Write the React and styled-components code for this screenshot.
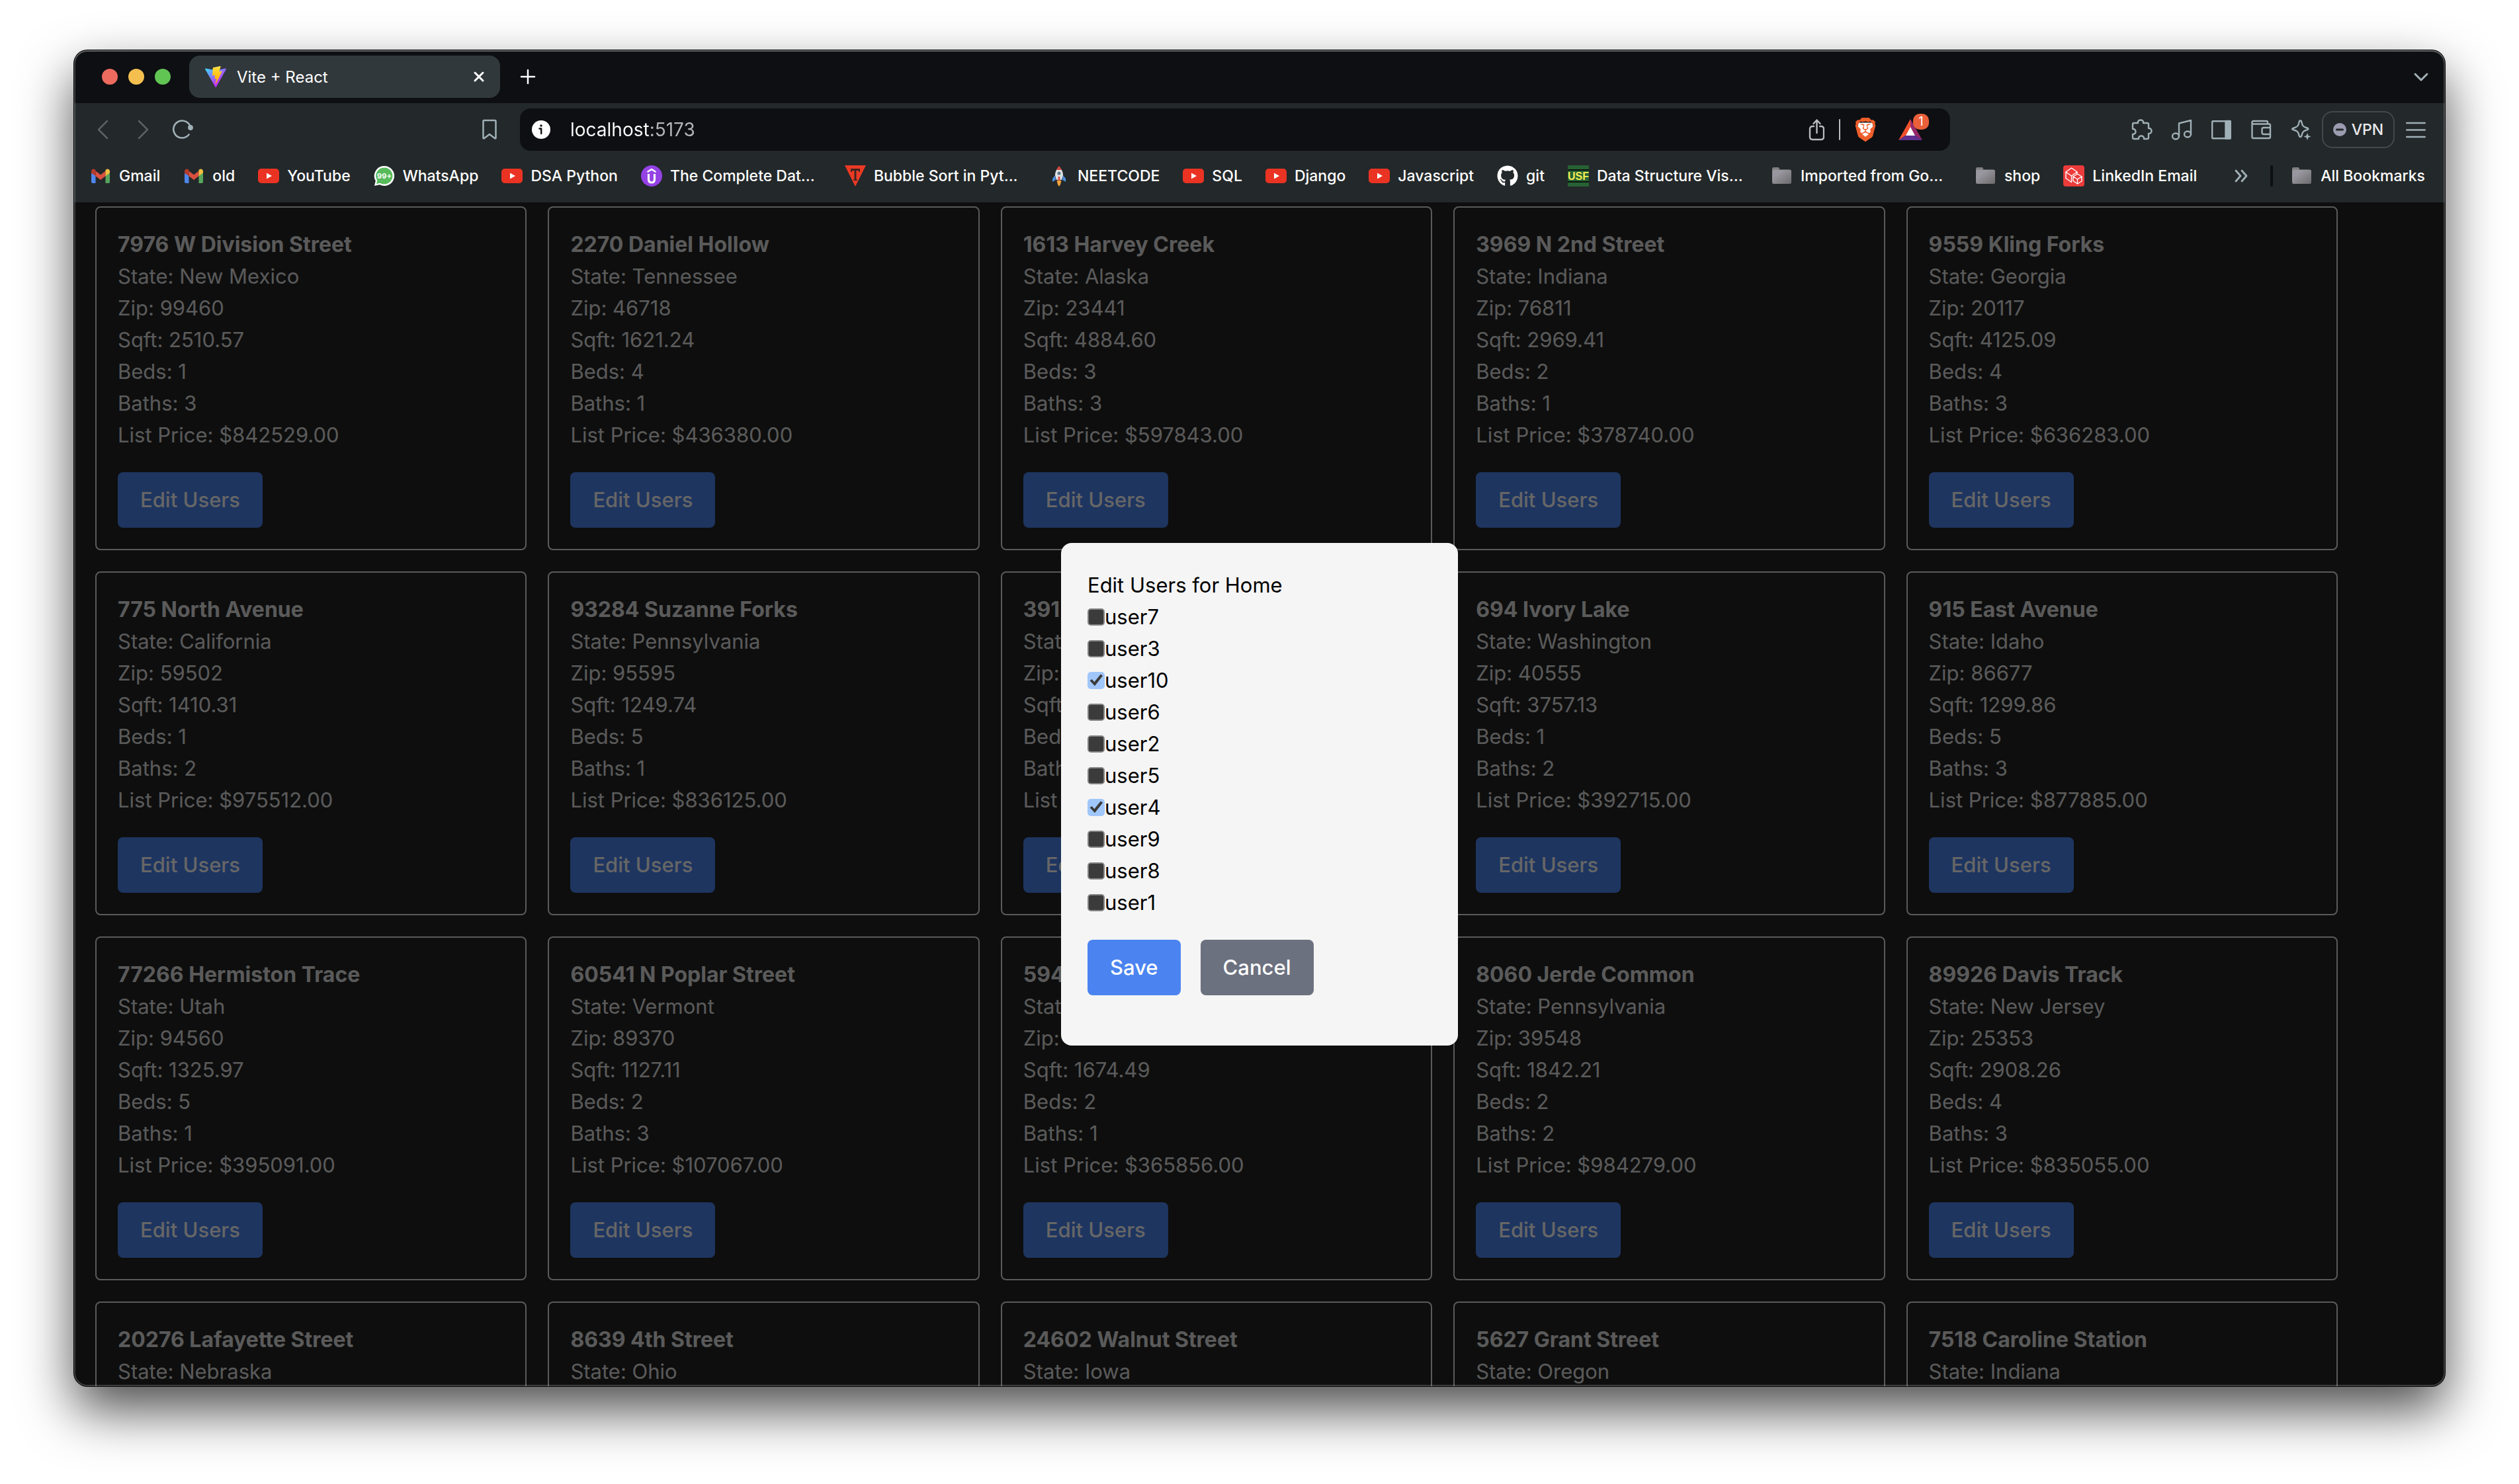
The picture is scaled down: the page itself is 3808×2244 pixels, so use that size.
import React from "react";
import styled, { createGlobalStyle } from "styled-components";
import { FaGithub } from "react-icons/fa";
import { SiBrave } from "react-icons/si";

const colors = {
  strip: "#0d0f12",
  toolbar: "#23282a",
  tab: "#31383b",
  icon: "#a0b0b7",
  iconDim: "#596165",
  page: "#242424",
  pageText: "#e1e1e1",
  blue: "#4b84f0",
  grey: "#6c717f",
};

const GlobalStyle = createGlobalStyle`
  *, *::before, *::after { box-sizing: border-box; }
  body {
    margin: 0;
    background: #fff;
    font-family: Inter, "Liberation Sans", sans-serif;
  }
  button { font-family: inherit; border: 0; background: none; padding: 0; cursor: pointer; }
`;

const Desktop = styled.main`
  display: flex;
  height: 100vh;
  padding: 76px 112px 148px;
  overflow: hidden;
`;

const BrowserWindow = styled.div`
  position: relative;
  display: flex;
  flex: 1;
  flex-direction: column;
  min-width: 0;
  overflow: hidden;
  border-radius: 20px;
  background: ${colors.toolbar};
  box-shadow: 0 0 0 1px #000, 0 36px 80px rgba(0, 0, 0, 0.7);

  &::after {
    content: "";
    position: absolute;
    inset: 0;
    z-index: 2;
    border-radius: 20px;
    box-shadow: inset 0 0 0 2px rgba(255, 255, 255, 0.2), inset 0 2px 0 rgba(255, 255, 255, 0.2);
    pointer-events: none;
  }
`;

const TabStrip = styled.header`
  display: flex;
  align-items: center;
  height: 80px;
  flex-shrink: 0;
  padding: 0 20px 0 42px;
  background: ${colors.strip};
`;

const TrafficLights = styled.div`
  display: flex;
  gap: 16px;
  margin-right: 28px;
`;

const Light = styled.button`
  width: 24px;
  height: 24px;
  border-radius: 50%;
  background: ${(p) => p.$color};
`;

const Tab = styled.div`
  display: flex;
  align-items: center;
  gap: 16px;
  width: 470px;
  height: 64px;
  padding: 0 16px 0 24px;
  border-radius: 16px;
  background: ${colors.tab};
  color: #fff;
  font-size: 24px;
  font-weight: 400;
`;

const TabTitle = styled.span`
  flex: 1;
`;

const IconButton = styled.button`
  display: flex;
  align-items: center;
  justify-content: center;
  flex-shrink: 0;
  width: ${(p) => (p.$narrow ? "24px" : "32px")};
  height: 32px;
  color: ${(p) => p.$color || colors.icon};
  margin-left: ${(p) => (p.$push ? "auto" : p.$space ? "26px" : "0")};
`;

const Toolbar = styled.div`
  display: grid;
  grid-template-columns: 644px minmax(0, 1fr) 718px;
  column-gap: 30px;
  align-items: center;
  height: 80px;
  flex-shrink: 0;
`;

const NavGroup = styled.nav`
  display: flex;
  align-items: center;
  gap: 28px;
  padding-left: 28px;
`;

const ToolGroup = styled.div`
  display: flex;
  align-items: center;
  justify-content: flex-end;
  gap: 16px;
  padding-right: 28px;
`;

const Extensions = styled.div`
  display: flex;
  gap: 28px;
`;

const VpnButton = styled.button`
  display: flex;
  align-items: center;
  justify-content: center;
  gap: 8px;
  width: 110px;
  height: 56px;
  border: 2px solid #40494e;
  border-radius: 16px;
  color: #e9eaec;
  font-size: 23px;
  font-weight: 500;
`;

const AddressBar = styled.div`
  display: flex;
  align-items: center;
  gap: 22px;
  height: 64px;
  padding: 0 30px 0 18px;
  border-radius: 16px;
  background: ${colors.strip};
`;

const AddressInput = styled.input`
  flex: 1;
  min-width: 0;
  height: 48px;
  margin-left: 8px;
  padding: 0;
  border: 0;
  outline: 0;
  font-family: inherit;
  font-size: 28px;
  color: #fff;
  background: linear-gradient(90deg, #fff 119px, #b4b6b8 119px);
  -webkit-background-clip: text;
  background-clip: text;
  -webkit-text-fill-color: transparent;
`;

const Divider = styled.span`
  width: ${(p) => p.$width}px;
  height: 32px;
  border-radius: 2px;
  background: ${(p) => p.$color};
`;

const RewardsButton = styled.button`
  position: relative;
  display: flex;
  justify-content: center;
  width: 60px;
`;

const Badge = styled.span`
  position: absolute;
  top: -8px;
  left: 34px;
  width: 24px;
  height: 24px;
  border-radius: 10px;
  background: #e9603a;
  color: #fff;
  font-size: 18px;
  line-height: 24px;
  text-align: center;
`;

const BookmarksBar = styled.nav`
  display: flex;
  align-items: center;
  gap: 35px;
  height: 70px;
  flex-shrink: 0;
  padding: 0 30px 10px 24px;
`;

const BookmarkLink = styled.a`
  display: flex;
  align-items: center;
  gap: 12px;
  color: #fff;
  font-size: 23px;
  font-weight: 500;
  line-height: 32px;
  white-space: nowrap;
  text-decoration: none;
`;

const BookmarkLabel = styled.span`
  width: ${(p) => (p.$long ? "229px" : "auto")};
`;

const BookmarksEnd = styled.div`
  display: flex;
  align-items: center;
  gap: 28px;
  margin-left: auto;
`;

const Viewport = styled.div`
  position: relative;
  flex: 1;
  min-height: 0;
  overflow: hidden;
  background: ${colors.page};
  color: ${colors.pageText};
`;

const HomeGrid = styled.section`
  display: grid;
  grid-template-columns: repeat(5, minmax(0, 1fr));
  gap: 32px;
  padding: 6px 162px 32px 32px;
`;

const Card = styled.article`
  padding: 32px;
  border: 2px solid ${colors.pageText};
  border-radius: 8px;
  font-size: 31px;
  line-height: 48px;
`;

const CardTitle = styled.h2`
  margin: 0;
  font-size: 32px;
  font-weight: 700;
  line-height: 48px;
`;

const CardLine = styled.p`
  margin: 0;
`;

const Button = styled.button`
  height: 84px;
  margin-top: 32px;
  padding: 0 34px;
  border-radius: 8px;
  background: ${(p) => (p.$muted ? colors.grey : colors.blue)};
  color: #fff;
  font-size: 31px;
  font-weight: 500;
  line-height: 48px;
`;

const Overlay = styled.div`
  position: absolute;
  inset: 0;
  display: flex;
  align-items: center;
  justify-content: center;
  background: rgba(0, 0, 0, 0.6);
`;

const Dialog = styled.form`
  width: 600px;
  padding: 40px 40px 76px;
  border-radius: 16px;
  background: #f5f5f5;
  color: #000;
  font-size: 31px;
  line-height: 48px;
`;

const DialogTitle = styled.h2`
  margin: 0;
  font-size: 31px;
  font-weight: 400;
  line-height: 48px;
`;

const UserOption = styled.label`
  display: flex;
  align-items: center;
  height: 48px;
`;

const Checkbox = styled.input`
  appearance: none;
  position: relative;
  width: 26px;
  height: 26px;
  margin: 0;
  border: 2px solid #858585;
  border-radius: 5px;
  background: #3b3b3b;

  &:checked {
    border-color: #a1c7fa;
    background: #a1c7fa;
  }

  &:checked::after {
    content: "";
    position: absolute;
    inset: 0;
    background: #3b3b3b;
    clip-path: polygon(7% 51%, 21% 41%, 38% 60%, 81% 7%, 96% 17%, 41% 87%);
  }
`;

const DialogActions = styled.div`
  display: flex;
  gap: 30px;
`;

/* ---------- icons ---------- */

const Svg = ({ w = 32, h = 32, children, stroke }) => (
  <svg
    width={w}
    height={h}
    viewBox={`0 0 ${w} ${h}`}
    fill="none"
    stroke={stroke ? "currentColor" : "none"}
    strokeWidth={stroke}
    strokeLinecap="round"
    strokeLinejoin="round"
    aria-hidden="true"
    style={{ flexShrink: 0, display: "block" }}
  >
    {children}
  </svg>
);

const ViteIcon = () => (
  <svg width="32" height="32" viewBox="0 0 256 257" aria-hidden="true">
    <defs>
      <linearGradient id="viteA" x1="0%" x2="57.6%" y1="7.6%" y2="78.4%">
        <stop offset="0%" stopColor="#41D1FF" />
        <stop offset="100%" stopColor="#BD34FE" />
      </linearGradient>
      <linearGradient id="viteB" x1="43.4%" x2="50.3%" y1="2.2%" y2="89%">
        <stop offset="0%" stopColor="#FFEA83" />
        <stop offset="8.3%" stopColor="#FFDD35" />
        <stop offset="100%" stopColor="#FFA800" />
      </linearGradient>
    </defs>
    <path fill="url(#viteA)" d="M255.153 37.938L134.897 252.976c-2.483 4.44-8.862 4.466-11.382.048L.875 37.958c-2.746-4.814 1.371-10.646 6.827-9.67l120.385 21.517a6.537 6.537 0 0 0 2.322-.004l117.867-21.483c5.438-.991 9.574 4.796 6.877 9.62Z" />
    <path fill="url(#viteB)" d="M185.432.063L96.44 17.501a3.268 3.268 0 0 0-2.634 3.014l-5.474 92.456a3.268 3.268 0 0 0 3.997 3.378l24.777-5.718c2.318-.535 4.413 1.507 3.936 3.838l-7.361 36.047c-.495 2.426 1.782 4.5 4.151 3.78l15.304-4.649c2.372-.72 4.652 1.36 4.15 3.788l-11.698 56.621c-.732 3.542 3.979 5.473 5.943 2.437l1.313-2.028l72.516-144.72c1.215-2.423-.88-5.186-3.54-4.672l-25.505 4.922c-2.396.462-4.435-1.77-3.759-4.114l16.646-57.705c.677-2.35-1.37-4.583-3.769-4.113Z" />
  </svg>
);

const CloseIcon = () => (
  <Svg stroke={3}><path d="M10 10l12 12M22 10L10 22" /></Svg>
);
const PlusIcon = () => (
  <Svg stroke={2.5}><path d="M16 6v20M6 16h20" /></Svg>
);
const ChevronDownIcon = () => (
  <Svg stroke={3}><path d="M7 12l9 9 9-9" /></Svg>
);
const BackIcon = () => (
  <Svg stroke={2.5}><path d="M22 3L9 16l13 13" /></Svg>
);
const ForwardIcon = () => (
  <Svg stroke={2.5}><path d="M10 3l13 13-13 13" /></Svg>
);
const ReloadIcon = () => (
  <Svg stroke={2.6}>
    <path d="M25.5 23.5A13 13 0 1 1 28 13" />
    <circle cx="28" cy="13" r="2.6" fill="currentColor" />
  </Svg>
);
const BookmarkIcon = () => (
  <Svg stroke={2.5}><path d="M6.500 3.500q0-1.500 1.500-1.500h16q1.500 0 1.500 1.500v25.500l-1 .5-8.500-6.500-8.500 6.500-1-.5z" /></Svg>
);
const InfoIcon = () => (
  <Svg w={28} h={28}>
    <circle cx="14" cy="14" r="14" fill="#fff" />
    <circle cx="14" cy="8" r="1.700" fill="#0d0f12" />
    <path d="M11.500 12.500h2.700v7.500" stroke="#0d0f12" strokeWidth="2.400" />
  </Svg>
);
const ShareIcon = () => (
  <Svg w={24} h={34} stroke={2.4}>
    <path d="M8 12H6q-4 0-4 4v12q0 4 4 4h13q4 0 4-4V16q0-4-4-4h-2M12.500 22V3M7.500 8l5-5.500 5 5.500" />
  </Svg>
);
const BraveIcon = () => (
  <svg width="36" height="36" viewBox="0 0 24 24" aria-hidden="true" style={{ flexShrink: 0 }}>
    <path d="M5 5h14l1 5-4 10-4 2-4-2L4 10z" fill="#fff" />
    <SiBrave size={24} color="#ee5e2a" />
  </svg>
);
const BatIcon = () => (
  <Svg w={36} h={32}>
    <path d="M18 0L0 32l12-8 6-11z" fill="#f0512c" />
    <path d="M18 0l18 32-12-8-6-11z" fill="#98296a" />
    <path d="M0 32h36l-12-8H12z" fill="#5f3090" />
    <path d="M18 12l7 13H11z" fill="#fff" />
  </Svg>
);
const PuzzleIcon = () => (
  <Svg stroke={2.4}>
    <path d="M2 8q0-2 2-2h6c-1.500-6 9.500-6 8 0h6q2 0 2 2v6c6-1 6 9 0 8v6q0 2-2 2h-5c1-6-9-6-8 0H4q-2 0-2-2v-5c6 .5 6-8.500 0-8z" />
  </Svg>
);
const MusicIcon = () => (
  <Svg stroke={2.4}>
    <ellipse cx="7" cy="26" rx="5" ry="4.500" />
    <ellipse cx="25" cy="23" rx="5" ry="4.500" />
    <path d="M12 26V6.500L30 2v21" />
  </Svg>
);
const SidebarIcon = () => (
  <Svg stroke={2.4}>
    <rect x="2.200" y="3.200" width="27.600" height="26" rx="1" />
    <path d="M22.500 3h7v26.500h-7z" fill="currentColor" />
  </Svg>
);
const WalletIcon = () => (
  <Svg stroke={2.4}>
    <path d="M30 13V9.500q0-2-2-2H2.500V5q0-2 2-2H24q2 0 2 2v2M2.500 7v20q0 2 2 2H28q2 0 2-2v-4M30 13v10H20q-2.500 0-2.500-2.500v-5Q17.500 13 20 13z" />
  </Svg>
);
const SparkleIcon = () => (
  <Svg stroke={2.4}>
    <path d="M15.500 2.500c1.500 0 1.500 0 2.500 4.500 1 4 2.500 5 6 6 4.500 1.200 4.500 2.800 0 4-3.500 1-5 2-6 6-1 5.500-4 5.500-5 0-1-4-2.500-5-6-6-5-1.300-5-2.700 0-4 3.500-1 5-2 6-6 1-4.500 1-4.500 2.500-4.500z" />
    <path d="M26 21l1.500 4 4 1.500-4 1.500-1.500 4-1.500-4-4-1.500 4-1.500z" fill="currentColor" stroke="none" />
  </Svg>
);
const MenuIcon = () => (
  <Svg stroke={2.4}><path d="M2.200 6h27.600M2.200 16.500h27.600M2.200 27h27.600" /></Svg>
);
const VpnDot = () => (
  <Svg w={20} h={20}>
    <circle cx="10" cy="10" r="10" fill="#9b9cb0" />
    <path d="M5.500 10h9" stroke="#23282a" strokeWidth="3" />
  </Svg>
);
const MoreIcon = () => (
  <Svg stroke={2.8}><path d="M8 8l7 8-7 8M17 8l7 8-7 8" /></Svg>
);

const GmailIcon = () => (
  <Svg>
    <path d="M2 12v13q0 2 2 2h4.500V14z" fill="#4f86ec" />
    <path d="M30 12v13q0 2-2 2h-4.500V14z" fill="#58a55c" />
    <path d="M8.500 8.500L16 14.200l7.500-5.700v7.800L16 22l-7.500-5.700z" fill="#d95040" />
    <path d="M2 12V9c0-3.500 3.500-4.500 5.500-2.800l1 .8v9.300L2 11.500z" fill="#b63a2c" />
    <path d="M30 12V9c0-3.500-3.500-4.500-5.500-2.800l-1 .8v9.300l6.500-4.800z" fill="#f2be42" />
  </Svg>
);
const YouTubeIcon = () => (
  <Svg>
    <rect x="0" y="5" width="32" height="22" rx="5" fill="#ea3323" />
    <path d="M13 11.500l8 4.500-8 4.500z" fill="#fff" />
  </Svg>
);
const WhatsAppIcon = () => (
  <Svg>
    <path d="M16 1a15 15 0 1 1-7 28.200L1 31l1.800-7.500A15 15 0 0 1 16 1z" fill="#fff" />
    <path d="M16 3.500a12.500 12.500 0 1 1-6.500 23.200L4 28l1.400-5A12.500 12.500 0 0 1 16 3.500z" fill="#57bb5b" />
    <text x="16" y="20" fill="#fff" fontSize="11" fontWeight="700" textAnchor="middle" fontFamily="Inter, sans-serif">99+</text>
  </Svg>
);
const UdemyIcon = () => (
  <Svg>
    <circle cx="16" cy="16" r="16" fill="#9442e5" />
    <path d="M10.500 9.500L16 6l5.500 3.500" stroke="#fff" strokeWidth="2.600" />
    <path d="M11.500 13v8q0 5 4.500 5t4.500-5v-8" stroke="#fff" strokeWidth="3.200" strokeLinecap="butt" />
  </Svg>
);
const TriangleIcon = () => (
  <Svg>
    <path d="M0 0h32L16 32z" fill="#ea3a24" />
    <path d="M9 5h14v5h-1.500l-1-2h-3v13.500h1.500V23h-6v-1.500h1.500V8h-3l-1 2H9z" fill="#40231f" />
  </Svg>
);
const RocketIcon = () => (
  <Svg>
    <path d="M10 15l-4 5v5l5-3zM22 15l4 5v5l-5-3z" fill="#4a8fdf" />
    <path d="M16 2c5 5 6 9 6 13l-2 7h-8l-2-7c0-4 1-8 6-13z" fill="#dfe3e8" />
    <path d="M16 1c2 2 3 3.500 4 6h-8c1-2.500 2-4 4-6z" fill="#c9483f" />
    <circle cx="16" cy="12" r="2.600" fill="#66798a" />
    <path d="M14.500 17h3v6h-3z" fill="#d9534a" />
    <path d="M12.500 23h7L18 29l-2 3-2-3z" fill="#f0a23c" />
  </Svg>
);
const GitIcon = () => <FaGithub size={32} color="#fff" />;
const UsfIcon = () => (
  <Svg>
    <rect width="32" height="32" fill="#276235" />
    <path d="M0 7h32M0 25h32" stroke="#0c120d" strokeWidth="2" />
    <text x="16" y="22" fill="#f5ee52" fontSize="16" fontWeight="700" textAnchor="middle" fontFamily="Liberation Sans, sans-serif">USF</text>
  </Svg>
);
const FolderIcon = () => (
  <Svg>
    <defs>
      <linearGradient id="folder" x1="0" y1="0" x2="1" y2="1">
        <stop offset="0.300" stopColor="#98979f" />
        <stop offset="1" stopColor="#6c6a6a" />
      </linearGradient>
    </defs>
    <path d="M1 8V5q0-2 2-2h7q1.500 0 2 2l.5 1.500z" fill="#7f7d7e" />
    <rect x="1" y="6.500" width="29" height="21.500" rx="2.500" fill="url(#folder)" />
  </Svg>
);
const CubesIcon = () => (
  <Svg>
    <rect width="32" height="32" rx="4" fill="#eb3b3b" />
    <g stroke="#fff" strokeWidth="1.400" strokeLinejoin="round">
      <path d="M12.500 4l8.500 6-8.500 6L4 10zM4 10v9.500l8.500 6V16M21 10v3" />
      <path d="M21.500 13l6.500 4-6.500 4-6.500-4zM15 17v6.500l6.500 4.500V21M28 17v7l-6.500 4" fill="#eb3b3b" />
    </g>
  </Svg>
);

/* ---------- data ---------- */

const BOOKMARKS = [
  ["Gmail", GmailIcon],
  ["old", GmailIcon],
  ["YouTube", YouTubeIcon],
  ["WhatsApp", WhatsAppIcon],
  ["DSA Python", YouTubeIcon],
  ["The Complete Dat...", UdemyIcon],
  ["Bubble Sort in Pyt...", TriangleIcon],
  ["NEETCODE", RocketIcon],
  ["SQL", YouTubeIcon],
  ["Django", YouTubeIcon],
  ["Javascript", YouTubeIcon],
  ["git", GitIcon],
  ["Data Structure Vis...", UsfIcon],
  ["Imported from Go...", FolderIcon],
  ["shop", FolderIcon],
  ["LinkedIn Email", CubesIcon],
];

const FIELDS = ["State", "Zip", "Sqft", "Beds", "Baths", "List Price"];

const HOMES = [
  ["7976 W Division Street", "New Mexico", "99460", "2510.57", "1", "3", "$842529.00"],
  ["2270 Daniel Hollow", "Tennessee", "46718", "1621.24", "4", "1", "$436380.00"],
  ["1613 Harvey Creek", "Alaska", "23441", "4884.60", "3", "3", "$597843.00"],
  ["3969 N 2nd Street", "Indiana", "76811", "2969.41", "2", "1", "$378740.00"],
  ["9559 Kling Forks", "Georgia", "20117", "4125.09", "4", "3", "$636283.00"],
  ["775 North Avenue", "California", "59502", "1410.31", "1", "2", "$975512.00"],
  ["93284 Suzanne Forks", "Pennsylvania", "95595", "1249.74", "5", "1", "$836125.00"],
  ["391 Main Street", "Texas", "73301", "1980.00", "3", "2", "$412300.00"],
  ["694 Ivory Lake", "Washington", "40555", "3757.13", "1", "2", "$392715.00"],
  ["915 East Avenue", "Idaho", "86677", "1299.86", "5", "3", "$877885.00"],
  ["77266 Hermiston Trace", "Utah", "94560", "1325.97", "5", "1", "$395091.00"],
  ["60541 N Poplar Street", "Vermont", "89370", "1127.11", "2", "3", "$107067.00"],
  ["594 Park Lane", "Ohio", "64888", "1674.49", "2", "1", "$365856.00"],
  ["8060 Jerde Common", "Pennsylvania", "39548", "1842.21", "2", "2", "$984279.00"],
  ["89926 Davis Track", "New Jersey", "25353", "2908.26", "4", "3", "$835055.00"],
  ["20276 Lafayette Street", "Nebraska"],
  ["8639 4th Street", "Ohio"],
  ["24602 Walnut Street", "Iowa"],
  ["5627 Grant Street", "Oregon"],
  ["7518 Caroline Station", "Indiana"],
];

const USERS = ["user7", "user3", "user10", "user6", "user2", "user5", "user4", "user9", "user8", "user1"];
const SELECTED = ["user10", "user4"];

const HomeCard = ({ home: [title, ...values] }) => (
  <Card>
    <CardTitle>{title}</CardTitle>
    {values.map((value, i) => (
      <CardLine key={FIELDS[i]}>{`${FIELDS[i]}: ${value}`}</CardLine>
    ))}
    {values.length === FIELDS.length && <Button type="button">Edit Users</Button>}
  </Card>
);

const EditUsersDialog = () => (
  <Overlay>
    <Dialog role="dialog" aria-labelledby="dialog-title" onSubmit={(e) => e.preventDefault()}>
      <DialogTitle id="dialog-title">Edit Users for Home</DialogTitle>
      {USERS.map((user) => (
        <UserOption key={user} htmlFor={user}>
          <Checkbox id={user} type="checkbox" defaultChecked={SELECTED.includes(user)} />
          {user}
        </UserOption>
      ))}
      <DialogActions>
        <Button type="submit">Save</Button>
        <Button type="button" $muted>Cancel</Button>
      </DialogActions>
    </Dialog>
  </Overlay>
);

export default function App() {
  return (
    <>
      <GlobalStyle />
      <Desktop>
        <BrowserWindow>
          <TabStrip>
            <TrafficLights>
              <Light $color="#ec6a5e" aria-label="Close window" />
              <Light $color="#f4bf4f" aria-label="Minimise window" />
              <Light $color="#61c554" aria-label="Zoom window" />
            </TrafficLights>
            <Tab>
              <ViteIcon />
              <TabTitle>Vite + React</TabTitle>
              <IconButton $color="#fff" aria-label="Close tab"><CloseIcon /></IconButton>
            </Tab>
            <IconButton $color="#fff" $space aria-label="New tab"><PlusIcon /></IconButton>
            <IconButton $push aria-label="Search tabs"><ChevronDownIcon /></IconButton>
          </TabStrip>

          <Toolbar>
            <NavGroup>
              <IconButton $color={colors.iconDim} aria-label="Back"><BackIcon /></IconButton>
              <IconButton $color={colors.iconDim} aria-label="Forward"><ForwardIcon /></IconButton>
              <IconButton aria-label="Reload"><ReloadIcon /></IconButton>
              <IconButton $push aria-label="Bookmark this page"><BookmarkIcon /></IconButton>
            </NavGroup>
            <AddressBar>
              <InfoIcon />
              <AddressInput aria-label="Address" defaultValue="localhost:5173" />
              <IconButton $narrow $color="#b9bbbe" aria-label="Share"><ShareIcon /></IconButton>
              <Divider $width={2} $color="#b9bbbe" />
              <IconButton aria-label="Brave Shields"><BraveIcon /></IconButton>
              <RewardsButton aria-label="Brave Rewards">
                <BatIcon />
                <Badge>1</Badge>
              </RewardsButton>
            </AddressBar>
            <ToolGroup>
              <Extensions>
                <IconButton aria-label="Extensions"><PuzzleIcon /></IconButton>
                <IconButton aria-label="Media"><MusicIcon /></IconButton>
                <IconButton aria-label="Sidebar"><SidebarIcon /></IconButton>
                <IconButton aria-label="Wallet"><WalletIcon /></IconButton>
                <IconButton aria-label="Leo AI"><SparkleIcon /></IconButton>
              </Extensions>
              <VpnButton><VpnDot />VPN</VpnButton>
              <IconButton aria-label="Menu"><MenuIcon /></IconButton>
            </ToolGroup>
          </Toolbar>

          <BookmarksBar>
            {BOOKMARKS.map(([label, Icon]) => (
              <BookmarkLink key={label} href="#">
                <Icon />
                <BookmarkLabel $long={label.endsWith("...")}>{label}</BookmarkLabel>
              </BookmarkLink>
            ))}
            <BookmarksEnd>
              <IconButton aria-label="More bookmarks"><MoreIcon /></IconButton>
              <Divider $width={4} $color={colors.strip} />
              <BookmarkLink href="#"><FolderIcon />All Bookmarks</BookmarkLink>
            </BookmarksEnd>
          </BookmarksBar>

          <Viewport>
            <HomeGrid>
              {HOMES.map((home) => <HomeCard key={home[0]} home={home} />)}
            </HomeGrid>
            <EditUsersDialog />
          </Viewport>
        </BrowserWindow>
      </Desktop>
    </>
  );
}
